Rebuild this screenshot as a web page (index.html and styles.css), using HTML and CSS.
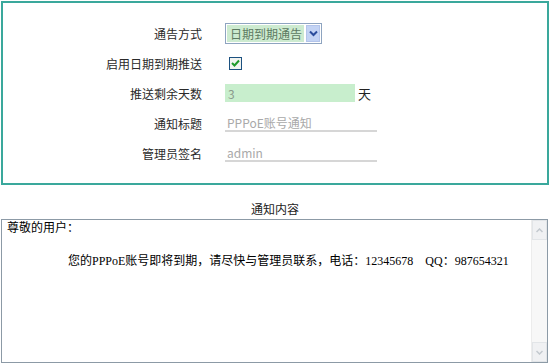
FILE: index.html
```html
<!DOCTYPE html>
<html lang="zh-CN">
<head>
    <meta charset="UTF-8">
    <meta name="viewport" content="width=device-width, initial-scale=1.0">
    <title>PPPoE到期通告</title>
    <link rel="stylesheet" href="styles.css">
</head>
<body>
    <div class="panel">
        <div class="form">
            <div class="label">通告方式</div>
            <div class="field">
                <div class="select">
                    <span class="select-text">日期到期通告</span>
                    <span class="select-btn">
                        <svg width="9" height="7" viewBox="0 0 9 7"><path d="M1 1.5 L4.5 5 L8 1.5" fill="none" stroke="#2b4c9c" stroke-width="2"/></svg>
                    </span>
                </div>
            </div>

            <div class="label">启用日期到期推送</div>
            <div class="field">
                <span class="checkbox">
                    <svg width="9" height="8" viewBox="0 0 9 8"><path d="M1 4 L3.5 6.5 L8 1.5" fill="none" stroke="#1f9a2a" stroke-width="2"/></svg>
                </span>
            </div>

            <div class="label">推送剩余天数</div>
            <div class="field">
                <input class="days" type="text" value="3">
                <span class="unit">天</span>
            </div>

            <div class="label">通知标题</div>
            <div class="field">
                <input class="line-input" type="text" placeholder="PPPoE账号通知">
            </div>

            <div class="label">管理员签名</div>
            <div class="field">
                <input class="line-input" type="text" placeholder="admin">
            </div>
        </div>
    </div>

    <div class="section-title">通知内容</div>
    <div class="textarea">
        <div class="content">
            <p>尊敬的用户：</p>
            <p>&nbsp;</p>
            <p class="indent">您的PPPoE账号即将到期，请尽快与管理员联系，电话：12345678&nbsp;&nbsp;&nbsp;&nbsp;QQ：987654321</p>
        </div>
        <div class="scrollbar">
            <div class="scroll-btn">
                <svg width="7" height="5" viewBox="0 0 7 5"><path d="M0.5 4 L3.5 1 L6.5 4" fill="none" stroke="#c3c9cf" stroke-width="1.5"/></svg>
            </div>
            <div class="scroll-track"></div>
            <div class="scroll-btn">
                <svg width="7" height="5" viewBox="0 0 7 5"><path d="M0.5 1 L3.5 4 L6.5 1" fill="none" stroke="#c3c9cf" stroke-width="1.5"/></svg>
            </div>
        </div>
    </div>
</body>
</html>
```

FILE: styles.css
```css
body {
    margin: 0;
    font-family: "Noto Sans CJK SC", sans-serif;
    font-size: 12px;
    color: #333;
    background-color: #fff;
}
.panel {
    margin: 1px 1px 0 1px;
    height: 184px;
    box-sizing: border-box;
    border: 2px solid #3aa89c;
    padding: 15px 0;
}
.form {
    display: grid;
    grid-template-columns: 199px 1fr;
    grid-auto-rows: 30px;
    column-gap: 23px;
    align-items: center;
}
.label {
    text-align: right;
    color: #2a2a2a;
}
.field {
    display: flex;
    align-items: center;
}
.select {
    display: flex;
    align-items: stretch;
    width: 97px;
    height: 21px;
    box-sizing: border-box;
    border: 1px solid #8ea4c0;
    background-color: #fff;
    padding: 1px;
}
.select-text {
    flex: 1;
    background-color: #cdebd0;
    color: #5d7a62;
    line-height: 17px;
    padding-left: 3px;
    margin-right: 2px;
}
.select-btn {
    width: 14px;
    display: flex;
    align-items: center;
    justify-content: center;
    background-color: #c3d3f4;
    border: 1px solid #b3c4ea;
    box-sizing: border-box;
}
.checkbox {
    width: 13px;
    height: 13px;
    box-sizing: border-box;
    margin-left: 4px;
    border: 1px solid #1c5180;
    background-color: #f2f4f0;
    display: flex;
    align-items: center;
    justify-content: center;
}
.days {
    width: 130px;
    height: 18px;
    box-sizing: border-box;
    border: none;
    outline: none;
    background-color: #c8eecd;
    color: #8a9a8c;
    font-family: "Noto Sans CJK SC", sans-serif;
    font-size: 12px;
    padding: 0 3px;
}
.unit {
    margin-left: 3px;
    font-size: 13px;
    color: #222;
}
.line-input {
    width: 152px;
    height: 18px;
    box-sizing: border-box;
    border: none;
    border-bottom: 2px solid #d6d6d6;
    outline: none;
    background: transparent;
    font-family: "Noto Sans CJK SC", sans-serif;
    font-size: 12px;
    padding: 0 2px;
}
.line-input::placeholder {
    color: #a9a9a9;
}
.section-title {
    padding-top: 15px;
    line-height: 18px;
    text-align: center;
    color: #222;
}
.textarea {
    display: flex;
    margin: 1px 2px 0 1px;
    height: 144px;
    box-sizing: border-box;
    border: 1px solid #8c9aa6;
    background-color: #fff;
}
.content {
    flex: 1;
    padding: 0 5px;
    font-family: "Liberation Serif", "Noto Sans CJK SC", serif;
    font-size: 12px;
    line-height: 16.5px;
    color: #000;
}
.content p {
    margin: 0;
}
.content .indent {
    padding-left: 61px;
}
.scrollbar {
    width: 15px;
    display: flex;
    flex-direction: column;
    background-color: #f7f7f7;
    border-left: 1px solid #ececec;
}
.scroll-btn {
    height: 18px;
    display: flex;
    align-items: center;
    justify-content: center;
    background-color: #f0f1f3;
    border: 1px solid #e2e5e8;
}
.scroll-track {
    flex: 1;
}
```
